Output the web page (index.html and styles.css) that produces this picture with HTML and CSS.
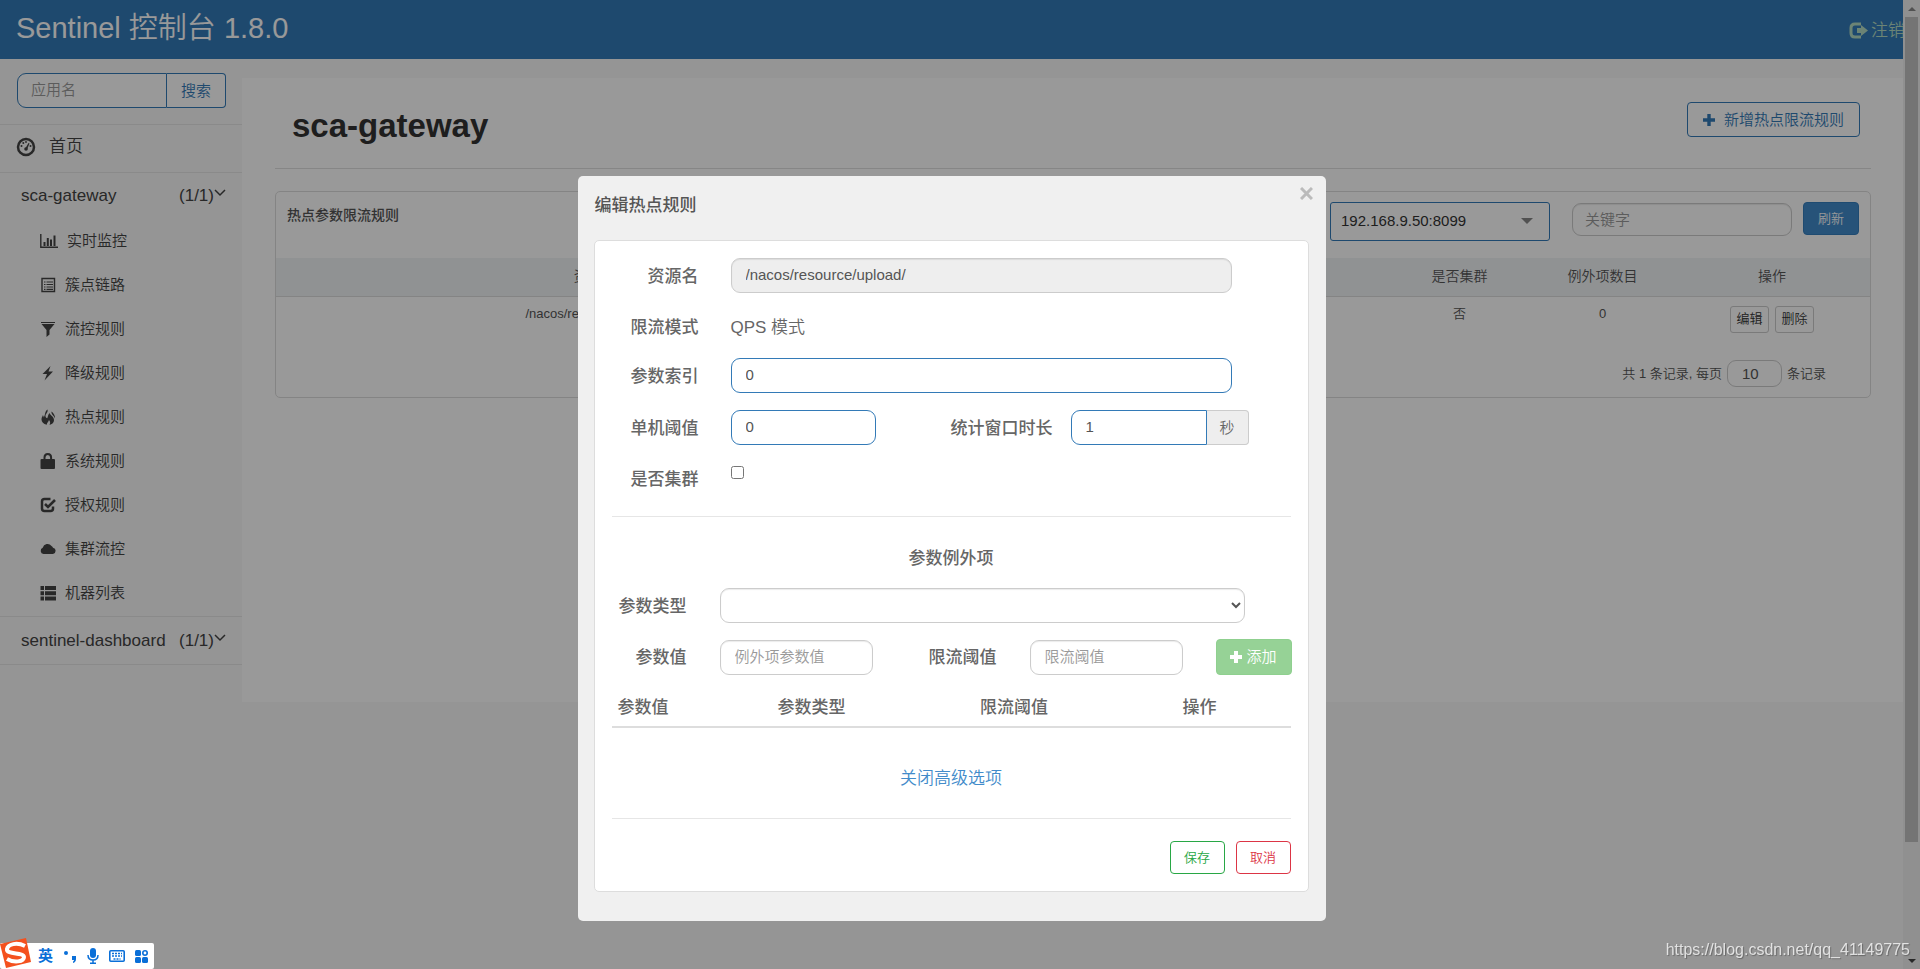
FILE: index.html
```html
<!DOCTYPE html>
<html lang="zh-CN">
<head>
<meta charset="utf-8">
<title>Sentinel 控制台</title>
<link rel="stylesheet" href="styles.css">
</head>
<body>
<header class="topbar">
  <h1 class="brand">Sentinel 控制台 1.8.0</h1>
  <a class="logout" href="#"><svg width="19" height="17" viewBox="0 0 19 17"><path d="M12 2H6Q2 2 2 6v5q0 4 4 4h6" fill="none" stroke="currentColor" stroke-width="3"/><path d="M8 6h4V3l7 5.500-7 5.500v-3H8z" fill="currentColor"/></svg>注销</a>
</header>
<div class="layout">
  <nav class="sidebar">
    <form class="app-search">
      <input class="app-input" type="text" placeholder="应用名" aria-label="应用名">
      <button class="app-button" type="button">搜索</button>
    </form>
    <a class="home" href="#"><svg width="20" height="20" viewBox="0 0 20 20"><circle cx="10" cy="10" r="8" fill="none" stroke="currentColor" stroke-width="2.500"/><path d="M9 12l3.500-6 1 .5-2.500 6z" fill="currentColor"/><circle cx="10" cy="12" r="1.800" fill="currentColor"/><g fill="currentColor"><circle cx="5.500" cy="9" r="1"/><circle cx="7.300" cy="6" r="1"/><circle cx="10" cy="5" r=".9"/><circle cx="14.500" cy="9" r="1"/></g></svg>首页</a>
    <a class="app" href="#"><span>sca-gateway</span><span class="count">(1/1)<svg width="12" height="8" viewBox="0 0 12 8"><path d="M1 1l5 5 5-5" fill="none" stroke="currentColor" stroke-width="1.500"/></svg></span></a>
    <ul class="menu">
      <li><a href="#"><svg width="18" height="14" viewBox="0 0 18 14"><path d="M.8 0v13.200H18" fill="none" stroke="currentColor" stroke-width="1.400"/><path d="M3.500 8h2v4h-2zM6.800 4h2v8h-2zM10 5.500h2V12h-2zM13.500 1.500h2V12h-2z" fill="currentColor"/></svg>实时监控</a></li>
      <li><a href="#"><svg width="16" height="16" viewBox="0 0 16 16"><path d="M2 1.500h12.500v13H2z" fill="none" stroke="currentColor" stroke-width="1.400"/><path d="M2 1.500h12.500M4 5h1.500M6.500 5H13M4 7.500h1.500M6.500 7.500H13M4 10h1.500M6.500 10H13M4 12.300h1.500M6.500 12.300H13" fill="none" stroke="currentColor" stroke-width="1.200"/></svg>簇点链路</a></li>
      <li><a href="#"><svg width="16" height="16" viewBox="0 0 16 16"><path d="M1 1h14v1H1zM1.500 3h13L9.500 9v4.500L6.500 16V9z" fill="currentColor"/></svg>流控规则</a></li>
      <li><a href="#"><svg width="16" height="16" viewBox="0 0 16 16"><path d="M10.500 1L2.500 9H7l-2.500 6.500L13 6.500H8.500z" fill="currentColor"/></svg>降级规则</a></li>
      <li><a href="#"><svg width="16" height="16" viewBox="0 0 16 16"><path d="M7.500.5c.8 3-2 4-2 6.500 0 1.500 1 2 1.700 2.200C8 8 7.700 6 9.500 4c.5 2 4.500 3.500 4.500 7 0 3-2.500 4.500-4.500 4.800 1-1.800.8-3.300-.5-4.800-.5 2-2 2.500-2.300 4.700C3.500 15 1.500 13 1.500 10.500c0-2 1-3 1.300-4.200.8.500 1 1.500.9 2.200C5.500 6 4.500 2.500 7.500.5zM11.500 2.500c2 1.500 3.800 4 3.500 7-1-3-4-4-3.500-7z" fill="currentColor"/></svg>热点规则</a></li>
      <li><a href="#"><svg width="16" height="16" viewBox="0 0 16 16"><path d="M4.500 7V4.500q0-3.500 3.300-3.500t3.300 3.500V7" fill="none" stroke="currentColor" stroke-width="2"/><path d="M1.500 6h12.500q1 0 1 1v8q0 1-1 1H1.500q-1 0-1-1V7q0-1 1-1z" fill="currentColor"/></svg>系统规则</a></li>
      <li><a href="#"><svg width="16" height="16" viewBox="0 0 16 16"><path d="M10.500 2H4.500Q2 2 2 4.500v7Q2 14 4.500 14h6q2.500 0 2.500-2.500V9.500" fill="none" stroke="currentColor" stroke-width="2.500"/><path d="M5 7l3 3 7-7" fill="none" stroke="currentColor" stroke-width="2.600"/></svg>授权规则</a></li>
      <li><a href="#"><svg width="16" height="16" viewBox="0 0 16 16"><path d="M3.500 13a3.300 3.300 0 0 1-.8-6.300A5 5 0 0 1 11.500 5a3 3 0 0 1 1.500 1.700A3.200 3.200 0 0 1 13 13z" fill="currentColor"/></svg>集群流控</a></li>
      <li><a href="#"><svg width="16" height="16" viewBox="0 0 16 16"><path d="M.5 1h3.500v4H.5zM5 1h11v4H5zM.5 6.200h3.500v4H.5zM5 6.200h11v4H5zM.5 11.500h3.500v4H.5zM5 11.500h11v4H5z" fill="currentColor"/></svg>机器列表</a></li>
    </ul>
    <a class="app app-last" href="#"><span>sentinel-dashboard</span><span class="count">(1/1)<svg width="12" height="8" viewBox="0 0 12 8"><path d="M1 1l5 5 5-5" fill="none" stroke="currentColor" stroke-width="1.500"/></svg></span></a>
  </nav>
  <main class="content">
    <div class="page-head">
      <h2 class="page-title">sca-gateway</h2>
      <button class="add-rule" type="button"><svg width="12" height="12" viewBox="0 0 12 12"><path d="M4.300 0h3.400v4.300H12v3.400H7.700V12H4.300V7.700H0V4.300h4.300z" fill="currentColor"/></svg>新增热点限流规则</button>
    </div>
    <section class="panel">
      <div class="panel-head">
        <span class="panel-title">热点参数限流规则</span>
        <span class="machine"><select class="machine-select" aria-label="机器"><option>192.168.9.50:8099</option></select></span>
        <input class="keyword" type="text" placeholder="关键字" aria-label="关键字">
        <button class="refresh" type="button">刷新</button>
      </div>
      <table class="rules">
        <colgroup><col class="c-res"><col><col><col><col class="c-flag"><col class="c-flag"><col class="c-ops"></colgroup>
        <thead><tr><th>资源名</th><th>参数索引</th><th>流控模式</th><th>阈值</th><th>是否集群</th><th>例外项数目</th><th>操作</th></tr></thead>
        <tbody><tr><td>/nacos/resource/upload/</td><td>0</td><td>QPS</td><td>0</td><td>否</td><td>0</td><td class="ops"><button class="mini" type="button">编辑</button><button class="mini" type="button">删除</button></td></tr></tbody>
      </table>
      <div class="pager"><label for="size">共 1 条记录, 每页</label><input id="size" class="page-size" type="text" value="10"><span>条记录</span></div>
    </section>
  </main>
</div>
<div class="scrollbar"><i class="up"></i><i class="thumb"></i><i class="down"></i></div>

<div class="overlay">
  <div class="modal" role="dialog" aria-labelledby="dialog-title">
    <div class="modal-head">
      <strong id="dialog-title" class="modal-title">编辑热点规则</strong>
      <button class="close" type="button" aria-label="关闭"><svg width="13" height="13" viewBox="0 0 13 13"><path d="M1 1l11 11M12 1L1 12" stroke="currentColor" stroke-width="3"/></svg></button>
    </div>
    <form class="card">
      <div class="row rule-row">
        <label for="res">资源名</label><input id="res" class="field span" type="text" value="/nacos/resource/upload/" disabled>
      </div>
      <div class="row rule-row mode"><span class="lab">限流模式</span><span>QPS 模式</span></div>
      <div class="row rule-row">
        <label for="idx">参数索引</label><input id="idx" class="field span blue" type="text" value="0">
      </div>
      <div class="row rule-row">
        <label for="thr">单机阈值</label><input id="thr" class="field blue" type="text" value="0">
        <label for="win">统计窗口时长</label><span class="group"><input id="win" class="field blue" type="text" value="1"><span class="addon">秒</span></span>
      </div>
      <div class="row rule-row cluster"><label for="clu">是否集群</label><input id="clu" class="check" type="checkbox"></div>
      <hr class="line">
      <h3 class="sub-title">参数例外项</h3>
      <div class="row item-row">
        <label for="type">参数类型</label><select id="type" class="field span"><option></option></select>
      </div>
      <div class="row item-row">
        <label for="val">参数值</label><input id="val" class="field" type="text" placeholder="例外项参数值">
        <label for="lim">限流阈值</label><input id="lim" class="field" type="text" placeholder="限流阈值">
        <button class="add-item" type="button"><svg width="12" height="12" viewBox="0 0 12 12"><path d="M4 0h4v4h4v4H8v4H4V8H0V4h4z" fill="currentColor"/></svg>添加</button>
      </div>
      <table class="items">
        <thead><tr><th class="first">参数值</th><th>参数类型</th><th>限流阈值</th><th class="last">操作</th></tr></thead>
      </table>
      <a class="advanced" href="#">关闭高级选项</a>
      <hr class="line">
      <div class="actions"><button class="act save" type="button">保存</button><button class="act cancel" type="button">取消</button></div>
    </form>
  </div>
</div>

<div class="ime">
  <svg class="ime-logo" width="31" height="31" viewBox="0 0 31 31"><path d="M0 6L26 0l5 24L6 30z" fill="#f4511e"/><path d="M25 8C17 4 8 6 7 11c-1 6 17 3 17 8 0 5-10 6-17 2" fill="none" stroke="#fff" stroke-width="4"/></svg>
  <span>英</span>
  <svg width="14" height="14" viewBox="0 0 14 14"><circle cx="3" cy="4" r="2"/><path d="M9 7h4v3q0 3-3 4v-1.500q1-.5 1-1.500H9z"/></svg>
  <svg width="12" height="16" viewBox="0 0 12 16"><rect x="3" width="6" height="10" rx="3"/><path d="M1 7q0 5 5 5t5-5M6 12v4M3 15.200h6" fill="none" stroke="#0a6fd8" stroke-width="1.500"/></svg>
  <svg width="16" height="12" viewBox="0 0 16 12"><rect x=".8" y=".8" width="14.400" height="10.400" rx="1" fill="none" stroke="#0a6fd8" stroke-width="1.600"/><path d="M3 3.500h10M3 6h10M4.500 9h7" stroke="#0a6fd8" stroke-width="1.500" stroke-dasharray="2 1"/></svg>
  <svg width="13" height="13" viewBox="0 0 13 13"><rect width="6" height="6" rx="1.500"/><circle cx="10" cy="3" r="2.200" fill="none" stroke="#0a6fd8" stroke-width="1.600"/><rect y="7" width="6" height="6" rx="1.500"/><rect x="7" y="7" width="6" height="6" rx="1.500"/></svg>
</div>
<div class="watermark">https://blog.csdn.net/qq_41149775</div>
</body>
</html>
```
FILE: styles.css
```css
* { box-sizing: border-box; }
body {
  margin: 0;
  background: #f8f8f8;
  color: #555;
  font: 350 17px/24px "Liberation Sans", "Noto Sans CJK SC", sans-serif;
}
input, select, button { font: inherit; color: inherit; margin: 0; }
button { padding: 0; cursor: pointer; }
a { color: inherit; text-decoration: none; }
svg { flex: none; }
::placeholder { color: #999; opacity: 1; }

.topbar {
  display: flex;
  justify-content: space-between;
  height: 59px;
  padding: 0 15px 0 16px;
  background: #337ab7;
}
.brand { margin: 0; color: #fff; font-size: 29px; font-weight: 350; line-height: 56px; }
.logout { display: flex; align-items: center; gap: 3px; padding-top: 2px; color: #b4dcc4; }

.layout { display: flex; margin-right: 17px; }
.sidebar { width: 242px; flex: none; }
.app-search { display: flex; padding: 14px 16px 16px 17px; }
.app-input {
  width: 150px; height: 35px; padding: 0 13px 2px;
  border: 1px solid #337ab7; border-radius: 9px 0 0 9px;
  background: #fff; font-size: 15px;
}
.app-button {
  flex: 1; border: 1px solid #337ab7; border-left: 0; border-radius: 0 4px 4px 0;
  background: #fff; color: #337ab7; font-size: 15px;
}
.home {
  display: flex; align-items: center; gap: 13px; height: 49px; padding: 0 0 3px 16px;
  border-top: 1px solid #e7e7e7; border-bottom: 1px solid #e7e7e7; color: #444;
}
.app { display: flex; justify-content: space-between; padding: 11px 16px 11px 21px; color: #444; }
.count { display: flex; }
.count svg { margin-top: 5px; }
.menu { list-style: none; margin: 0; padding: 0 0 1px; color: #444; }
.menu a { display: flex; align-items: center; gap: 9px; height: 44px; padding-left: 40px; font-size: 15px; }
.app-last { border-top: 1px solid #e7e7e7; border-bottom: 1px solid #e7e7e7; padding-top: 12px; }

.content { flex: 1; margin-top: 19px; padding: 0 32px 0 33px; background: #fff; min-height: 624px; }
.page-head {
  display: flex; justify-content: space-between; align-items: flex-start;
  height: 91px; padding: 24px 11px 0 17px; border-bottom: 1px solid #e0e0e0;
}
.page-title { margin: 0; color: #333; font-size: 33px; font-weight: 700; line-height: 48px; }
.add-rule {
  display: flex; align-items: center; justify-content: center; gap: 9px;
  width: 173px; height: 35px; border: 1px solid #337ab7; border-radius: 4px;
  background: #fff; color: #337ab7; font-size: 15px;
}
.panel { margin-top: 22px; border: 1px solid #ddd; border-radius: 5px; }
.panel-head { display: flex; align-items: flex-start; height: 66px; padding: 10px 11px; }
.panel-title { margin-right: auto; font-size: 14px; font-weight: 500; line-height: 26px; }
.machine { position: relative; width: 220px; }
.machine::after {
  content: ""; position: absolute; right: 17px; top: 16px;
  border: 6px solid transparent; border-top-color: #888; border-bottom: 0;
}
.machine-select {
  width: 100%; height: 39px; padding: 0 10px 2px; appearance: none;
  border: 1px solid #337ab7; border-radius: 3px; background: #fff; color: #333; font-size: 15px;
}
.keyword {
  width: 220px; height: 33px; margin: 1px 11px 0 22px; padding: 0 12px;
  border: 1px solid #ccc; border-radius: 9px; background: #fff; font-size: 15px;
  box-shadow: inset 0 1px 1px rgba(0, 0, 0, .08);
}
.refresh { width: 56px; height: 33px; border: 1px solid #357ebd; border-radius: 4px; background: #428bca; color: #fff; font-size: 13px; }
.rules { width: 100%; table-layout: fixed; border-collapse: collapse; font-size: 14px; line-height: 20px; }
.c-res { width: 40%; }
.c-flag { width: 143px; }
.c-ops { width: 196px; }
.rules th { height: 38px; padding: 0 0 1px; background: #f1f3f6; border-bottom: 1px solid #ddd; font-weight: 350; }
.rules td { height: 64px; padding: 7px 0 0; text-align: center; vertical-align: top; font-size: 13px; }
.rules .ops { padding-top: 9px; }
.mini {
  width: 39px; height: 27px; margin: 0 3px; border: 1px solid #ccc; border-radius: 3px;
  background: #fff; color: #333; font-size: 13px;
}
.pager { display: flex; justify-content: flex-end; align-items: center; gap: 5px; padding: 0 44px 10px; font-size: 13px; }
.page-size {
  width: 55px; height: 27px; padding: 0 14px; border: 1px solid #ccc; border-radius: 9px;
  background: #fff; font-size: 15px;
}

.scrollbar { position: fixed; inset: 0 0 0 auto; width: 17px; background: #f1f1f1; }
.thumb { position: absolute; top: 17px; bottom: 127px; left: 2px; right: 2px; background: #c1c1c1; }
.up, .down { position: absolute; left: 5px; border: 4px solid transparent; }
.up { top: 7px; border-bottom-color: #888; border-top: 0; }
.down { bottom: 6px; border-top-color: #444; border-bottom: 0; }

.overlay {
  position: fixed; inset: 0; padding: 176px 17px 0 0;
  background: rgba(0, 0, 0, .4);
}
.modal { width: 748px; margin: 0 auto; padding: 0 17px 29px 16px; border-radius: 5px; background: #f0f0f0; color: #666; }
.modal-head { display: flex; justify-content: space-between; align-items: flex-start; height: 64px; }
.modal-title { padding-left: 1px; font-weight: 500; line-height: 59px; color: #555; }
.close { display: flex; margin: 11px -4px 0 0; border: 0; background: none; color: #bbb; }
.card { padding: 17px; border: 1px solid #ddd; border-radius: 5px; background: #fff; }
.row { display: grid; align-items: center; }
.row label, .lab { padding-top: 2px; text-align: right; font-weight: 500; }
.rule-row { grid-template-columns: 87px 145px 145px 178px; column-gap: 32px; margin-bottom: 17px; }
.span { grid-column: 2 / 5; }
.rule-row .span { margin-right: 31px; }
.field {
  width: auto; height: 35px; padding: 0 14px 2px; min-width: 0;
  border: 1px solid #ccc; border-radius: 9px; background: #fff;
  font-size: 15px; color: #555; box-shadow: inset 0 1px 1px rgba(0, 0, 0, .08);
}
.field:disabled { background: #eee; }
.blue { border-color: #337ab7; box-shadow: none; }
.mode { height: 31px; padding-top: 4px; }
.mode .lab { padding-top: 0; }
.group { display: flex; width: 178px; margin-left: -14px; }
.group .field { width: 136px; border-radius: 9px 0 0 9px; }
.addon {
  flex: 1; border: 1px solid #ccc; border-left: 0; border-radius: 0 4px 4px 0;
  background: #eee; text-align: center; font-size: 15px; line-height: 33px;
}
.cluster { height: 37px; align-items: start; }
.cluster label { padding-top: 6px; }
.check { width: 13px; height: 13px; margin-top: 4px; }
.line { margin: 0; border: 0; border-top: 1px solid #e6e6e6; }
.sub-title { margin: 29px 0 16px; text-align: center; font-size: 17px; font-weight: 500; line-height: 26px; }
.item-row { grid-template-columns: 75px 153px 91px 153px 76px; column-gap: 33px; margin-bottom: 16px; }
.item-row .span { margin-right: -62px; padding: 0 4px; }
.add-item {
  display: flex; align-items: center; justify-content: center; gap: 4px; height: 36px;
  border: 1px solid #8fd08f; border-radius: 4px; background: #96d296; color: #fff; font-size: 15px;
}
.items { width: 100%; border-collapse: collapse; table-layout: fixed; }
.items th { height: 36px; padding: 0 6px 2px; border-bottom: 2px solid #ddd; text-align: left; font-weight: 500; }
.items .first { width: 160px; }
.items .last { width: 114px; }
.advanced { display: block; padding: 39px 0 27px; text-align: center; color: #428bca; }
.actions { display: flex; justify-content: flex-end; gap: 11px; padding-top: 22px; }
.act { width: 55px; height: 33px; border: 1px solid; border-radius: 4px; background: #fff; font-size: 13px; }
.save { color: #28a745; }
.cancel { color: #dc3545; }

.ime {
  position: fixed; left: 0; bottom: 0; display: flex; align-items: center; gap: 10px;
  height: 26px; padding-right: 6px; border-radius: 2px; background: #fff;
  color: #0a6fd8; fill: #0a6fd8; font-size: 15px; font-weight: 700;
}
.ime-logo { margin: -5px -3px 0 0; }
.watermark {
  position: fixed; right: 10px; bottom: 7px; color: rgba(255, 255, 255, .75);
  font-size: 16px; text-shadow: 1px 1px 1px rgba(0, 0, 0, .3);
}
```
